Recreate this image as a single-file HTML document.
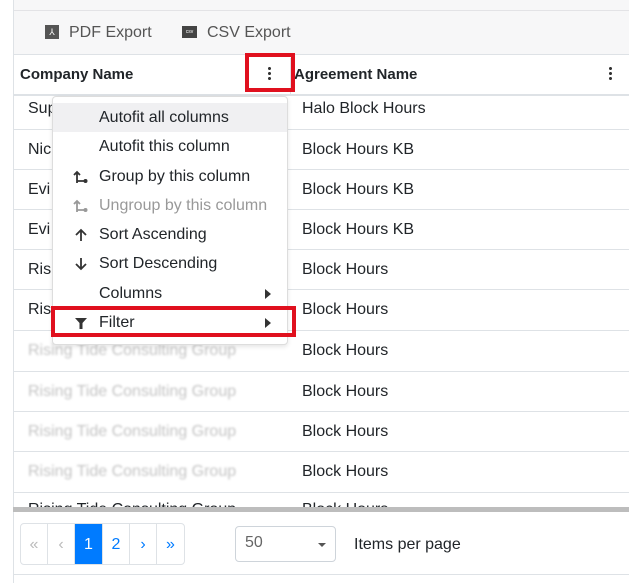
<!DOCTYPE html>
<html><head><style>
*{box-sizing:border-box;margin:0;padding:0}
body{width:629px;height:583px;background:#fff;font-family:"Liberation Sans",Arial,sans-serif;font-size:16px;color:#212529;position:relative;overflow:hidden}
.abs{position:absolute}
.row{position:absolute;left:13px;right:0;border-bottom:1px solid #dee2e6}
.c1{position:absolute;left:15px}
.c2{position:absolute;left:289px}
.blur{color:#c4c4c4;filter:blur(1.1px)}
.mi{position:absolute;left:0;right:0;height:29px;line-height:29px;padding-left:46px;color:#212529}
.mi svg{position:absolute;left:20px;top:7px}
.arr{position:absolute;right:16px;top:10px;width:0;height:0;border-left:6px solid #333;border-top:5px solid transparent;border-bottom:5px solid transparent}
.pg{position:absolute;top:0;height:41px;width:27px;text-align:center;line-height:41px;color:#007bff;border-right:1px solid #dee2e6}
</style></head><body>
<div class="abs" style="left:13px;top:0;width:616px;height:55px;background:#f7f7f8;border-bottom:1px solid #dee2e6"></div>
<div class="abs" style="left:13px;top:10px;width:616px;border-top:1px solid #e3e3e6"></div>
<div class="abs" style="left:13px;top:0;height:583px;border-left:1px solid #dee2e6"></div>
<div class="abs" style="left:45px;top:25px;width:14px;height:14px;background:#555;color:#fff;font-size:9px;text-align:center;line-height:14px">⅄</div>
<div class="abs" style="left:69px;top:24px;color:#555">PDF Export</div>
<div class="abs" style="left:182px;top:26px;width:15px;height:12px;background:#444;color:#fff;font-size:5px;text-align:center;line-height:12px">csv</div>
<div class="abs" style="left:207px;top:24px;color:#555">CSV Export</div>
<div class="row" style="top:55px;height:41px;border-bottom:2px solid #dee2e6"></div>
<div class="abs" style="left:20px;top:66px;font-weight:bold;font-size:15px">Company Name</div>
<div class="abs" style="left:294px;top:66px;font-weight:bold;font-size:15px">Agreement Name</div>
<div class="abs" style="left:268px;top:66px;width:3px;height:14px;background:radial-gradient(circle,#333 1.4px,transparent 1.6px) 0 0/3px 5px"></div>
<div class="abs" style="left:609px;top:66px;width:3px;height:14px;background:radial-gradient(circle,#333 1.4px,transparent 1.6px) 0 0/3px 5px"></div>
<div class="abs" style="left:290px;top:58px;height:36px;border-left:1px solid #dee2e6"></div>
<div class="row" style="top:96px;height:34px"><span class="c1" style="top:4px">Sup</span><span class="c2" style="top:4px">Halo Block Hours</span></div>
<div class="row" style="top:130px;height:40px"><span class="c1" style="top:11px">Nic</span><span class="c2" style="top:11px">Block Hours KB</span></div>
<div class="row" style="top:170px;height:40px"><span class="c1" style="top:11px">Evi</span><span class="c2" style="top:11px">Block Hours KB</span></div>
<div class="row" style="top:210px;height:40px"><span class="c1" style="top:11px">Evi</span><span class="c2" style="top:11px">Block Hours KB</span></div>
<div class="row" style="top:250px;height:40px"><span class="c1" style="top:11px">Ris</span><span class="c2" style="top:11px">Block Hours</span></div>
<div class="row" style="top:290px;height:41px"><span class="c1" style="top:11px">Ris</span><span class="c2" style="top:11px">Block Hours</span></div>
<div class="row" style="top:331px;height:41px"><span class="c1 blur" style="top:11px">Rising Tide Consulting Group</span><span class="c2" style="top:11px">Block Hours</span></div>
<div class="row" style="top:372px;height:40px"><span class="c1 blur" style="top:11px">Rising Tide Consulting Group</span><span class="c2" style="top:11px">Block Hours</span></div>
<div class="row" style="top:412px;height:40px"><span class="c1 blur" style="top:11px">Rising Tide Consulting Group</span><span class="c2" style="top:11px">Block Hours</span></div>
<div class="row" style="top:452px;height:41px"><span class="c1 blur" style="top:11px">Rising Tide Consulting Group</span><span class="c2" style="top:11px">Block Hours</span></div>
<div class="row" style="top:493px;height:14px;overflow:hidden;border:none"><span class="c1" style="top:8px">Rising Tide Consulting Group</span><span class="c2" style="top:8px">Block Hours</span></div>
<div class="abs" style="left:13px;top:507px;width:616px;height:5px;background:#bdbdbd"></div>
<div class="abs" style="left:20px;top:523px;width:165px;height:42px;border:1px solid #dee2e6;border-radius:4px;overflow:hidden">
<div class="pg" style="left:0;color:#bbb">«</div>
<div class="pg" style="left:27px;color:#bbb">‹</div>
<div class="pg" style="left:54px;width:28px;background:#007bff;color:#fff">1</div>
<div class="pg" style="left:82px">2</div>
<div class="pg" style="left:109px">›</div>
<div class="pg" style="left:136px;border:none">»</div>
</div>
<div class="abs" style="left:235px;top:526px;width:101px;height:36px;border:1px solid #ced4da;border-radius:4px;color:#666;padding:7px 0 0 9px">50<span class="abs" style="right:9px;top:16px;border-top:4px solid #555;border-left:4px solid transparent;border-right:4px solid transparent"></span></div>
<div class="abs" style="left:354px;top:536px">Items per page</div>
<div class="abs" style="left:13px;top:574px;width:616px;border-top:1px solid #dee2e6"></div>
<div class="abs" style="left:52px;top:96px;width:236px;height:249px;background:#fff;border:1px solid #ddd;border-radius:4px;box-shadow:0 2px 5px rgba(0,0,0,.1)">
<div class="mi" style="top:6px;background:#f0f0f2">Autofit all columns</div>
<div class="mi" style="top:35px">Autofit this column</div>
<div class="mi" style="top:65px"><svg width="16" height="16" viewBox="0 0 16 16"><path d="M4 14V3M1 6l3-3 3 3M4 12h7" stroke="#333" stroke-width="1.8" fill="none"/><circle cx="12.5" cy="12" r="2" fill="#333"/></svg>Group by this column</div>
<div class="mi" style="top:94px;color:#999"><svg width="16" height="16" viewBox="0 0 16 16"><path d="M4 14V3M1 6l3-3 3 3M4 12h7" stroke="#999" stroke-width="1.8" fill="none"/><circle cx="12.5" cy="12" r="2" fill="#999"/></svg>Ungroup by this column</div>
<div class="mi" style="top:123px"><svg width="16" height="16" viewBox="0 0 16 16"><path d="M8 14V3M3 8l5-5 5 5" stroke="#333" stroke-width="1.8" fill="none"/></svg>Sort Ascending</div>
<div class="mi" style="top:152px"><svg width="16" height="16" viewBox="0 0 16 16"><path d="M8 2v11M3 8l5 5 5-5" stroke="#333" stroke-width="1.8" fill="none"/></svg>Sort Descending</div>
<div class="mi" style="top:182px">Columns<span class="arr"></span></div>
<div class="mi" style="top:211px"><svg width="16" height="16" viewBox="0 0 16 16"><path d="M2 3h12l-4.5 5v6h-3V8z" fill="#333"/></svg>Filter<span class="arr"></span></div>
</div>
<div class="abs" style="left:245px;top:53px;width:50px;height:39px;border:4px solid #e0101e"></div>
<div class="abs" style="left:51px;top:306px;width:245px;height:31px;border:4px solid #e0101e"></div>
</body></html>
